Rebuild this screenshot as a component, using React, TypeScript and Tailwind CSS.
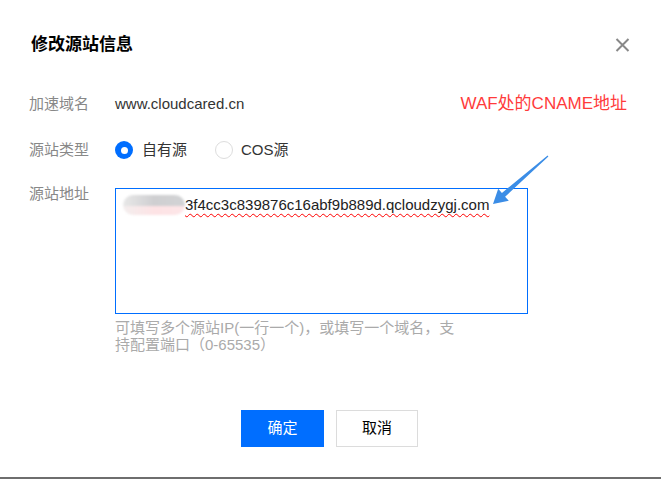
export default function App() {
  return (
    <div className="relative flex h-[479px] w-[661px] flex-col overflow-hidden bg-white font-['Liberation_Sans','Noto_Sans_CJK_SC',sans-serif] text-[15px]">
      {/* header */}
      <div className="mt-[33px] flex h-6 items-center justify-between pl-[31px] pr-[31px]">
        <h1 className="text-[17px] font-bold leading-6 text-black">修改源站信息</h1>
        <svg width="15" height="14" viewBox="0 0 15 14">
          <path d="M1.5 1L13.5 13M13.5 1L1.5 13" stroke="#888" strokeWidth="2" />
        </svg>
      </div>

      {/* domain */}
      <div className="mt-[35px] flex h-6 items-center pl-[29px] pr-[34px]">
        <span className="w-[86px] text-[#888]">加速域名</span>
        <span className="text-[#333]">www.cloudcared.cn</span>
        <span className="ml-auto text-[17px] text-[#ff3b3b]">WAF处的CNAME地址</span>
      </div>

      {/* type */}
      <div className="mt-[22px] flex h-6 items-center pl-[29px]">
        <span className="w-[86px] text-[#888]">源站类型</span>
        <div className="flex items-center">
          <span className="flex h-[18px] w-[18px] items-center justify-center rounded-full bg-[#006eff]">
            <span className="h-[7px] w-[7px] rounded-full bg-white" />
          </span>
          <span className="ml-[9px] text-[#333]">自有源</span>
        </div>
        <div className="ml-[28px] flex items-center">
          <span className="h-[18px] w-[18px] rounded-full border border-[#ddd]" />
          <span className="ml-[8px] text-[#333]">COS源</span>
        </div>
      </div>

      {/* address */}
      <div className="mt-[20px] flex items-start pl-[29px]">
        <span className="w-[86px] leading-6 text-[#888]">源站地址</span>
        <div className="flex flex-col">
          <div className="mt-[6px] h-[126px] w-[413px] border border-[#006eff] px-[7px] pt-[6px]">
            <div className="flex items-center leading-5 text-[#222]">
              <span className="relative inline-block h-[20px] w-[62px] overflow-hidden rounded-full blur-[1px]">
                <span className="absolute inset-x-0 top-0 h-[11px] bg-gradient-to-r from-[#e8e8e8] via-[#cfcfd1] to-[#d2d3d5]" />
                <span className="absolute inset-x-0 bottom-0 h-[9px] bg-gradient-to-r from-[#f3eeee] via-[#fde3e5] to-[#fde6e8]" />
              </span>
              <span className="underline decoration-[#ff0000] decoration-wavy decoration-1 underline-offset-[3px]">
                3f4cc3c839876c16abf9b889d.qcloudzygj.com
              </span>
            </div>
          </div>
          <p className="mt-[5px] leading-[17px] text-[#aaa]">
            可填写多个源站IP(一行一个)，或填写一个域名，支
            <br />
            持配置端口（0-65535）
          </p>
        </div>
      </div>

      {/* actions */}
      <div className="mt-[57px] flex justify-center gap-3 pr-[2px]">
        <button className="h-[37px] w-[83px] bg-[#006eff] text-white">确定</button>
        <button className="h-[37px] w-[82px] border border-[#dcdcdc] bg-white text-black">取消</button>
      </div>

      <div className="mt-auto h-[2px] bg-[#6e6e6e]" />

      {/* annotation arrow */}
      <svg className="pointer-events-none absolute left-0 top-0" width="661" height="479">
        <polygon
          points="493,204 498.2,188.8 501.9,192.9 547.6,155.4 548.4,156.4 505.1,196.7 508.8,200.8"
          fill="#3b8de6"
        />
      </svg>
    </div>
  );
}
